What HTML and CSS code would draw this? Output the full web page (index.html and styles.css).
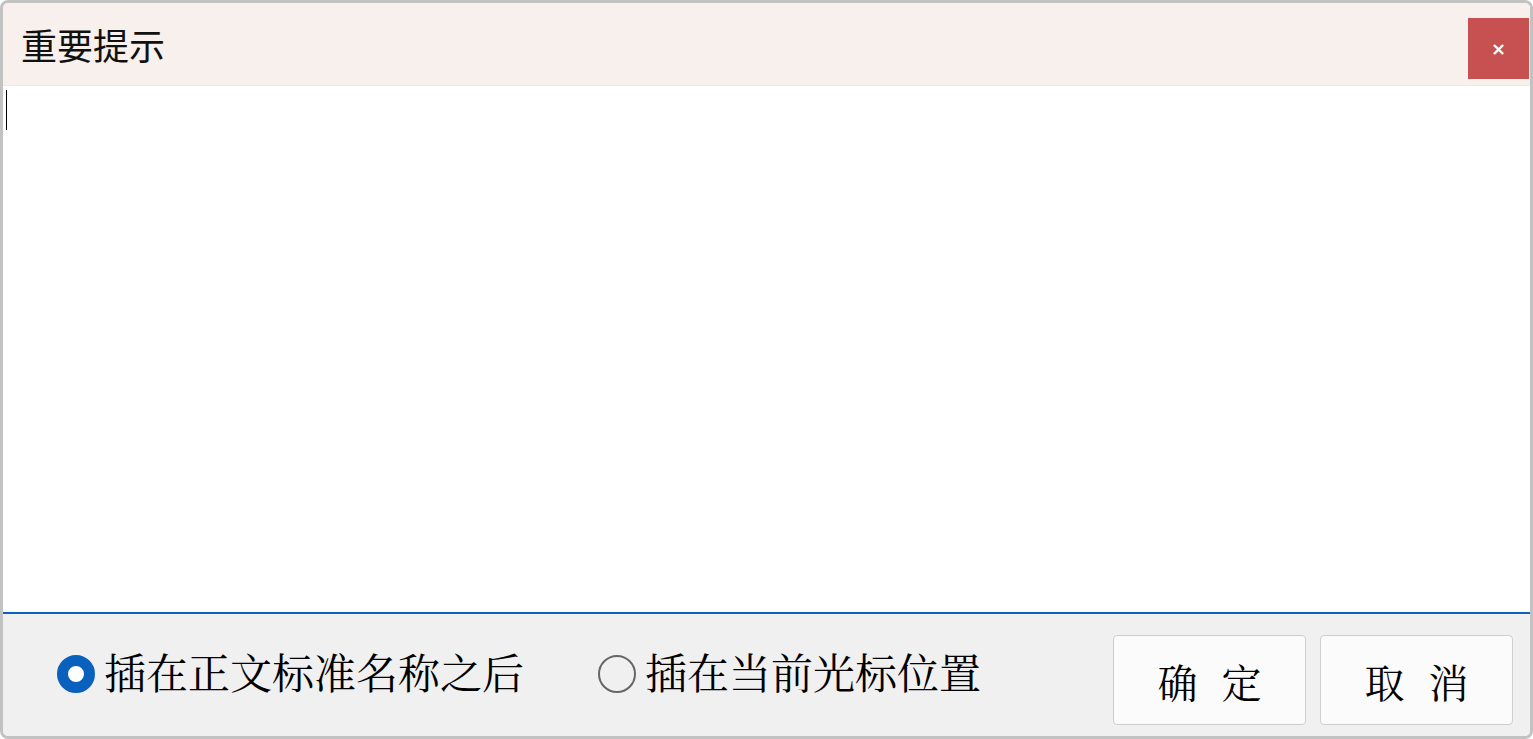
FILE: index.html
```html
<!DOCTYPE html>
<html lang="zh-CN">
<head>
  <meta charset="UTF-8">
  <title>重要提示</title>
  <link rel="stylesheet" href="styles.css">
</head>
<body>

<div class="janela">
  <div class="titulo">
    <span class="titulo-texto">重要提示</span>
    <button class="fechar">×</button>
  </div>

  <div class="conteudo">
    <span class="cursor"></span>
  </div>

  <div class="rodape">
    <div class="opcoes">
      <label class="opcao">
        <span class="radio marcado"></span>
        <span>插在正文标准名称之后</span>
      </label>
      <label class="opcao">
        <span class="radio"></span>
        <span>插在当前光标位置</span>
      </label>
    </div>
    <div class="botoes">
      <button class="botao"><span>确</span><span>定</span></button>
      <button class="botao"><span>取</span><span>消</span></button>
    </div>
  </div>
</div>

</body>
</html>
```

FILE: styles.css
```css
html, body {
  margin: 0;
  height: 100%;
}

body {
  background-color: #ffffff;
  font-family: "Noto Sans CJK SC", sans-serif;
}

.janela {
  box-sizing: border-box;
  height: 739px;
  border: 3px solid #c2c2c2;
  border-radius: 8px;
  overflow: hidden;
  display: flex;
  flex-direction: column;
}

.titulo {
  height: 82px;
  flex-shrink: 0;
  display: flex;
  justify-content: space-between;
  align-items: flex-start;
  background-color: #f8f0ec;
  border-bottom: 1px solid #ece7e4;
}

.titulo-texto {
  font-size: 36px;
  line-height: 82px;
  padding-left: 18px;
  color: #111111;
}

.fechar {
  width: 61px;
  height: 61px;
  margin-top: 15px;
  margin-right: 1px;
  border: none;
  background-color: #c75050;
  color: white;
  font-size: 18px;
  font-weight: bold;
  font-family: "DejaVu Sans", sans-serif;
  padding: 0;
  cursor: pointer;
}

.conteudo {
  flex: 1;
  background-color: #ffffff;
  border-bottom: 2px solid #0a63bf;
  padding: 4px 3px;
}

.cursor {
  display: block;
  width: 1px;
  height: 40px;
  background-color: #000000;
}

.rodape {
  height: 122px;
  flex-shrink: 0;
  box-sizing: border-box;
  background-color: #f0f0f0;
  display: flex;
  justify-content: space-between;
  align-items: flex-start;
  padding: 21px 17px 0 54px;
}

.opcoes {
  display: flex;
  gap: 74px;
  margin-top: 14px;
}

.opcao {
  display: flex;
  align-items: center;
  gap: 9px;
  font-family: "Noto Serif CJK SC", "Noto Sans CJK SC", serif;
  font-size: 42px;
  line-height: 42px;
  color: #000000;
}

.radio {
  box-sizing: border-box;
  width: 38px;
  height: 38px;
  border-radius: 50%;
  border: 2px solid #666666;
  margin-top: 6px;
}

.radio.marcado {
  border: 11px solid #0a60bd;
  background-color: #ffffff;
}

.botoes {
  display: flex;
  gap: 14px;
}

.botao {
  width: 193px;
  height: 90px;
  display: flex;
  justify-content: center;
  align-items: center;
  gap: 24px;
  border: 1px solid #cfcfcf;
  border-radius: 4px;
  background-color: #fbfbfb;
  font-family: "Noto Serif CJK SC", "Noto Sans CJK SC", serif;
  font-size: 40px;
  color: #000000;
  padding: 0;
  cursor: pointer;
}
```
